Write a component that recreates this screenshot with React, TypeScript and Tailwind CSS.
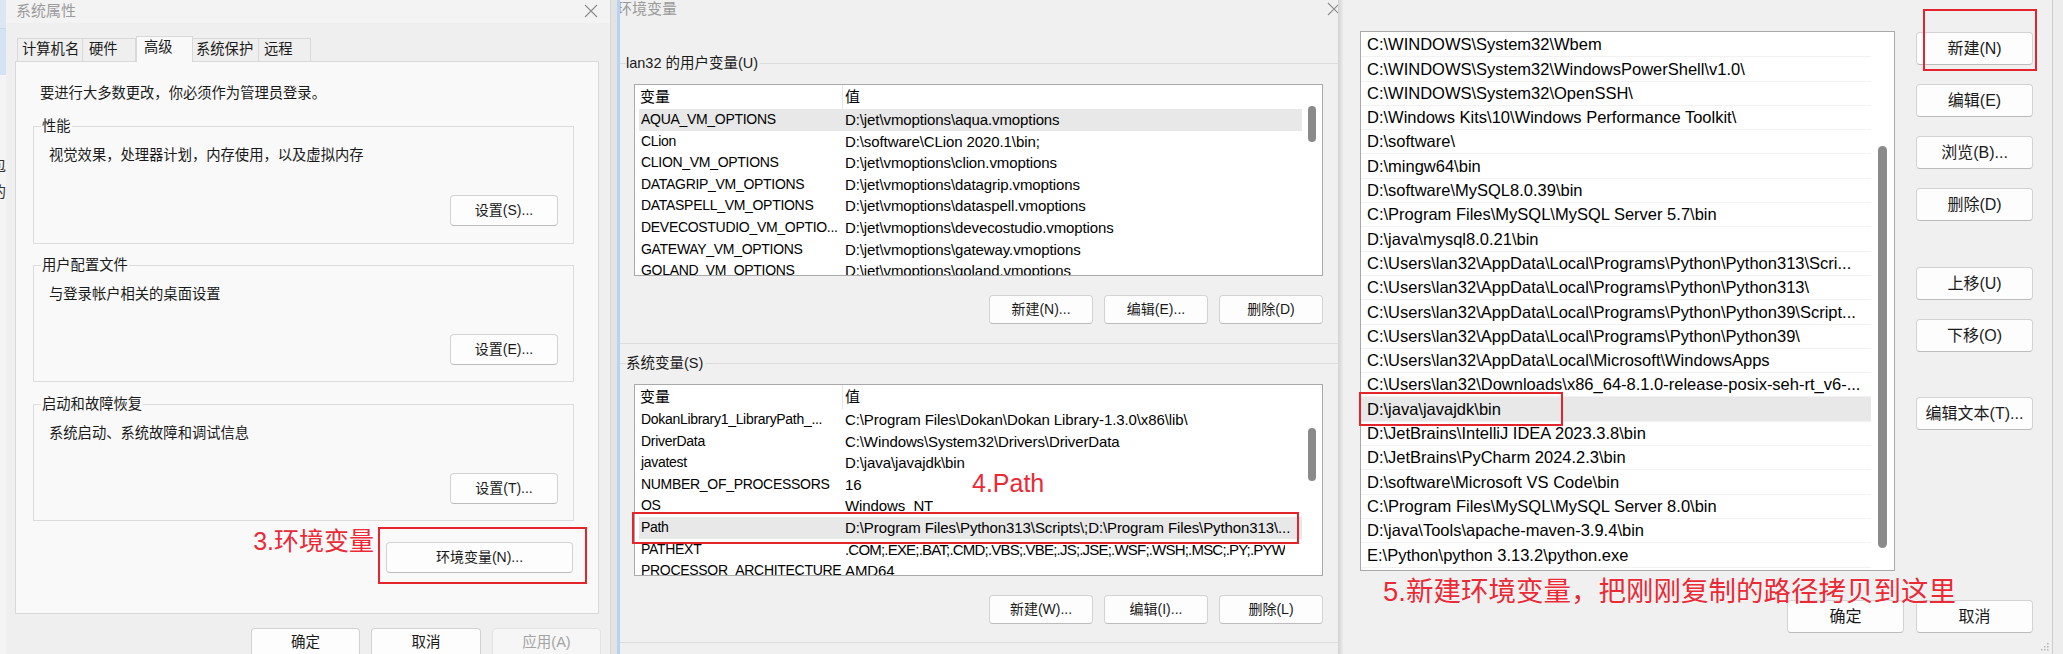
import React from 'react';

const userVars: [string, string][] = [
  ['AQUA_VM_OPTIONS', 'D:\\jet\\vmoptions\\aqua.vmoptions'],
  ['CLion', 'D:\\software\\CLion 2020.1\\bin;'],
  ['CLION_VM_OPTIONS', 'D:\\jet\\vmoptions\\clion.vmoptions'],
  ['DATAGRIP_VM_OPTIONS', 'D:\\jet\\vmoptions\\datagrip.vmoptions'],
  ['DATASPELL_VM_OPTIONS', 'D:\\jet\\vmoptions\\dataspell.vmoptions'],
  ['DEVECOSTUDIO_VM_OPTIO...', 'D:\\jet\\vmoptions\\devecostudio.vmoptions'],
  ['GATEWAY_VM_OPTIONS', 'D:\\jet\\vmoptions\\gateway.vmoptions'],
  ['GOLAND_VM_OPTIONS', 'D:\\jet\\vmoptions\\goland.vmoptions'],
];

const sysVars: [string, string][] = [
  ['DokanLibrary1_LibraryPath_...', 'C:\\Program Files\\Dokan\\Dokan Library-1.3.0\\x86\\lib\\'],
  ['DriverData', 'C:\\Windows\\System32\\Drivers\\DriverData'],
  ['javatest', 'D:\\java\\javajdk\\bin'],
  ['NUMBER_OF_PROCESSORS', '16'],
  ['OS', 'Windows_NT'],
  ['Path', 'D:\\Program Files\\Python313\\Scripts\\;D:\\Program Files\\Python313\\...'],
  ['PATHEXT', '.COM;.EXE;.BAT;.CMD;.VBS;.VBE;.JS;.JSE;.WSF;.WSH;.MSC;.PY;.PYW'],
  ['PROCESSOR_ARCHITECTURE', 'AMD64'],
];

const pathEntries = [
  'C:\\WINDOWS\\System32\\Wbem',
  'C:\\WINDOWS\\System32\\WindowsPowerShell\\v1.0\\',
  'C:\\WINDOWS\\System32\\OpenSSH\\',
  'D:\\Windows Kits\\10\\Windows Performance Toolkit\\',
  'D:\\software\\',
  'D:\\mingw64\\bin',
  'D:\\software\\MySQL8.0.39\\bin',
  'C:\\Program Files\\MySQL\\MySQL Server 5.7\\bin',
  'D:\\java\\mysql8.0.21\\bin',
  'C:\\Users\\lan32\\AppData\\Local\\Programs\\Python\\Python313\\Scri...',
  'C:\\Users\\lan32\\AppData\\Local\\Programs\\Python\\Python313\\',
  'C:\\Users\\lan32\\AppData\\Local\\Programs\\Python\\Python39\\Script...',
  'C:\\Users\\lan32\\AppData\\Local\\Programs\\Python\\Python39\\',
  'C:\\Users\\lan32\\AppData\\Local\\Microsoft\\WindowsApps',
  'C:\\Users\\lan32\\Downloads\\x86_64-8.1.0-release-posix-seh-rt_v6-...',
  'D:\\java\\javajdk\\bin',
  'D:\\JetBrains\\IntelliJ IDEA 2023.3.8\\bin',
  'D:\\JetBrains\\PyCharm 2024.2.3\\bin',
  'D:\\software\\Microsoft VS Code\\bin',
  'C:\\Program Files\\MySQL\\MySQL Server 8.0\\bin',
  'D:\\java\\Tools\\apache-maven-3.9.4\\bin',
  'E:\\Python\\python 3.13.2\\python.exe',
];

const Btn = ({ label, className = '', disabled = false }: { label: string; className?: string; disabled?: boolean }) => (
  <div
    className={`flex shrink-0 items-center justify-center rounded-[4px] border ${
      disabled ? 'border-[#e2e2e2] bg-[#f6f6f6] text-[#a3a3a3]' : 'border-[#d3d3d3] border-b-[#bcbcbc] bg-[#fdfdfd] text-[#1a1a1a]'
    } ${className}`}
  >
    {label}
  </div>
);

const CloseX = () => (
  <svg width="14" height="14" viewBox="0 0 14 14" className="shrink-0">
    <path d="M1 1L13 13M13 1L1 13" stroke="#8c8c8c" strokeWidth="1.1" />
  </svg>
);

const Group = ({ title, text, btn, className }: { title: string; text: string; btn: string; className: string }) => (
  <div className={`relative ml-[17px] mr-[24px] border border-[#dcdcdc] ${className}`}>
    <span className="absolute left-[7px] top-[-11px] bg-[#f9f9f9] px-px leading-[20px]">{title}</span>
    <div className="ml-[15px] mt-[18px] leading-[20px]">{text}</div>
    <div className="mt-[30px] flex justify-end pr-[15px]">
      <Btn label={btn} className="h-[31px] w-[108px] text-[14px]" />
    </div>
  </div>
);

const VarList = ({ rows, selected, thumb }: { rows: [string, string][]; selected: number; thumb: string }) => (
  <div className="ml-[14px] mt-[20px] flex h-[192px] w-[689px] border border-[#a9a9a9] bg-white text-[15px] text-black">
    <div className="min-w-0 flex-1 overflow-hidden pl-[4px]">
      <div className="flex h-[24px] items-center">
        <div className="flex h-full w-[204px] shrink-0 items-center border-r border-[#e6e6e6] pl-[1px]">变量</div>
        <div className="pl-[2px]">值</div>
      </div>
      {rows.map(([k, v], i) => (
        <div key={k} className={`flex h-[21.6px] items-center whitespace-nowrap leading-[21.6px] ${i === selected ? 'bg-[#e8e8e8]' : ''}`}>
          <div className="w-[204px] shrink-0 overflow-hidden pl-[2px] text-[14px] tracking-[-0.3px]">{k}</div>
          <div className={`overflow-hidden pl-[2px] ${k === 'PATHEXT' ? 'tracking-[-0.8px]' : 'tracking-[-0.1px]'}`}>{v}</div>
        </div>
      ))}
    </div>
    <div className="w-[20px] shrink-0 pl-[6px]">
      <div className={`w-[8px] rounded-full bg-[#8a8a8a] ${thumb}`} />
    </div>
  </div>
);

const VarButtons = ({ labels }: { labels: string[] }) => (
  <div className="ml-[14px] mt-[19px] flex w-[689px] justify-end gap-[11px]">
    {labels.map((l) => (
      <Btn key={l} label={l} className="h-[29px] w-[104px] text-[14px]" />
    ))}
  </div>
);

export default function App() {
  return (
    <div className="flex h-[654px] w-[2063px] overflow-hidden bg-[#e6e6e6] font-['Liberation_Sans','Noto_Sans_CJK_SC',sans-serif] text-[#1a1a1a]">
      {/* sliver of the window behind */}
      <div className="flex w-[6px] shrink-0 flex-col overflow-hidden bg-[#f4f4f4]">
        <div className="h-[29px] border-b border-[#c5d5ea] bg-[#dce7f4]" />
        <div className="h-[46px] bg-[#d3e2f5]" />
        <div className="-ml-[9px] mt-[78px] text-[15px] leading-[26px] text-[#333]">包</div>
        <div className="-ml-[9px] text-[15px] leading-[26px] text-[#333]">的</div>
      </div>

      {/* 系统属性 */}
      <div className="flex w-[604px] shrink-0 flex-col bg-[#efefef] text-[14.3px]">
        <div className="flex h-[27px] items-center justify-between bg-[#f3f3f3] pl-[10px] pr-[12px]">
          <span className="text-[15px] text-[#9b9b9b]">系统属性</span>
          <CloseX />
        </div>
        <div className="mt-[13px] pl-[9px] pr-[11px]">
          <div className="flex h-[25px] items-end pl-[2px]">
            <div className="flex h-[23px] w-[66px] items-center border border-b-0 border-[#d9d9d9] pl-[4px]">计算机名</div>
            <div className="flex h-[23px] w-[53px] items-center border-y border-r border-b-0 border-[#d9d9d9] pl-[6px]">硬件</div>
            <div className="relative z-10 -mb-px flex h-[26px] w-[57px] items-center border border-b-0 border-[#d9d9d9] bg-[#f9f9f9] pb-[2px] pl-[7px]">高级</div>
            <div className="flex h-[23px] w-[66px] items-center border-y border-r border-b-0 border-[#d9d9d9] pl-[3px]">系统保护</div>
            <div className="flex h-[23px] w-[52px] items-center border-y border-r border-b-0 border-[#d9d9d9] pl-[5px]">远程</div>
          </div>
          <div className="h-[553px] border border-[#d9d9d9] bg-[#f9f9f9]">
            <div className="ml-[24px] mt-[21px] leading-[20px]">要进行大多数更改，你必须作为管理员登录。</div>
            <Group title="性能" text="视觉效果，处理器计划，内存使用，以及虚拟内存" btn="设置(S)..." className="mt-[23px] h-[118px]" />
            <Group title="用户配置文件" text="与登录帐户相关的桌面设置" btn="设置(E)..." className="mt-[21px] h-[117px]" />
            <Group title="启动和故障恢复" text="系统启动、系统故障和调试信息" btn="设置(T)..." className="mt-[22px] h-[117px]" />
            <div className="mt-[21px] flex justify-end pr-[25px]">
              <div className="relative">
                <Btn label="环境变量(N)..." className="h-[31px] w-[187px] text-[14px]" />
                <div className="absolute left-[-8px] top-[-15px] h-[57px] w-[209px] border-2 border-[#e5252d]" />
                <span className="absolute right-[199px] top-[-16px] whitespace-nowrap text-[25px] leading-[30px] text-[#ea2a36] [text-shadow:0_0_2px_#fff]">
                  3.环境变量
                </span>
              </div>
            </div>
          </div>
          <div className="mr-[-2px] mt-[14px] flex justify-end gap-[11px]">
            <Btn label="确定" className="h-[31px] w-[109px] text-[14.5px]" />
            <Btn label="取消" className="h-[31px] w-[110px] text-[14.5px]" />
            <Btn label="应用(A)" disabled className="h-[31px] w-[109px] text-[14.5px]" />
          </div>
        </div>
      </div>

      <div className="w-[7px] shrink-0 border-l border-[#d6d6d6] bg-[#e3e3e3]" />

      {/* 环境变量 */}
      <div className="w-[721px] shrink-0 border-l-[3px] border-[#b8d2f1] bg-[#f0f0f0]">
        <div className="h-full overflow-hidden text-[14.5px]">
          <div className="flex h-[18px] items-center justify-between">
            <span className="-ml-[3px] text-[15px] text-[#9a9a9a]">环境变量</span>
            <div className="-mr-[3px]">
              <CloseX />
            </div>
          </div>

          <div className="relative mt-[45px] h-[281px] border-y border-[#dcdcdc]">
            <span className="absolute left-[6px] top-[-11px] bg-[#f0f0f0] pr-[2px] leading-[20px]">lan32 的用户变量(U)</span>
            <VarList rows={userVars} selected={0} thumb="mt-[21px] h-[36px]" />
            <VarButtons labels={['新建(N)...', '编辑(E)...', '删除(D)']} />
          </div>

          <div className="relative mt-[19px] h-[280px] border-y border-[#dcdcdc]">
            <span className="absolute left-[6px] top-[-11px] bg-[#f0f0f0] pr-[2px] leading-[20px]">系统变量(S)</span>
            <VarList rows={sysVars} selected={5} thumb="mt-[43px] h-[53px]" />
            <VarButtons labels={['新建(W)...', '编辑(I)...', '删除(L)']} />
            <div className="absolute left-[12px] top-[148px] h-[32px] w-[667px] border-2 border-[#e5252d]" />
            <span className="absolute left-[352px] top-[104px] whitespace-nowrap text-[25px] leading-[30px] text-[#ea2a36] [text-shadow:0_0_2px_#fff]">
              4.Path
            </span>
          </div>
        </div>
      </div>

      <div className="w-[5px] shrink-0 bg-linear-to-r from-[#d2d2d2] to-[#ebebeb]" />

      {/* 编辑环境变量 */}
      <div className="relative flex w-[709px] shrink-0 flex-col bg-[#f0f0f0]">
        <div className="flex">
          <div className="ml-[17px] mt-[31px] flex h-[540px] w-[535px] border border-[#a9a9a9] bg-white text-[16.5px] text-black">
            <div className="min-w-0 flex-1 overflow-hidden pt-px">
              {pathEntries.map((p, i) => (
                <div
                  key={p}
                  className={`flex h-[24.3px] items-center whitespace-nowrap border-b border-[#f2f2f2] pl-[6px] ${i === 15 ? 'bg-[#e8e8e8]' : ''}`}
                >
                  {p}
                </div>
              ))}
            </div>
            <div className="w-[23px] shrink-0 pl-[7px]">
              <div className="mt-[114px] h-[402px] w-[9px] rounded-full bg-[#8a8a8a]" />
            </div>
          </div>
          <div className="ml-[21px] mt-[32px] flex w-[117px] flex-col text-[16px]">
            <Btn label="新建(N)" className="h-[33px]" />
            <Btn label="编辑(E)" className="mt-[19px] h-[33px]" />
            <Btn label="浏览(B)..." className="mt-[19px] h-[33px]" />
            <Btn label="删除(D)" className="mt-[19px] h-[33px]" />
            <Btn label="上移(U)" className="mt-[46px] h-[33px]" />
            <Btn label="下移(O)" className="mt-[19px] h-[33px]" />
            <Btn label="编辑文本(T)..." className="mt-[45px] h-[33px]" />
          </div>
        </div>
        <div className="mt-[29px] flex justify-end gap-[12px] pr-[19px] text-[16px]">
          <Btn label="确定" className="h-[33px] w-[117px]" />
          <Btn label="取消" className="h-[33px] w-[117px]" />
        </div>

        <div className="absolute left-[580px] top-[9px] h-[62px] w-[114px] border-2 border-[#e5252d]" />
        <div className="absolute left-[16px] top-[392px] h-[34px] w-[204px] border-2 border-[#e5252d]" />
        <span className="absolute left-[40px] top-[575px] whitespace-nowrap text-[27.5px] leading-[34px] text-[#ea2a36] [text-shadow:0_0_2px_#fff]">
          5.新建环境变量，把刚刚复制的路径拷贝到这里
        </span>
        <svg width="10" height="10" viewBox="0 0 10 10" className="absolute bottom-[3px] right-[3px]">
          <rect x="8" y="2" width="1.5" height="1.5" fill="#b5b5b5" />
          <rect x="5" y="5" width="1.5" height="1.5" fill="#b5b5b5" />
          <rect x="8" y="5" width="1.5" height="1.5" fill="#b5b5b5" />
          <rect x="2" y="8" width="1.5" height="1.5" fill="#b5b5b5" />
          <rect x="5" y="8" width="1.5" height="1.5" fill="#b5b5b5" />
          <rect x="8" y="8" width="1.5" height="1.5" fill="#b5b5b5" />
        </svg>
      </div>

      <div className="w-[11px] shrink-0 border-l border-[#cdcdcd] bg-[#ededed]" />
    </div>
  );
}
